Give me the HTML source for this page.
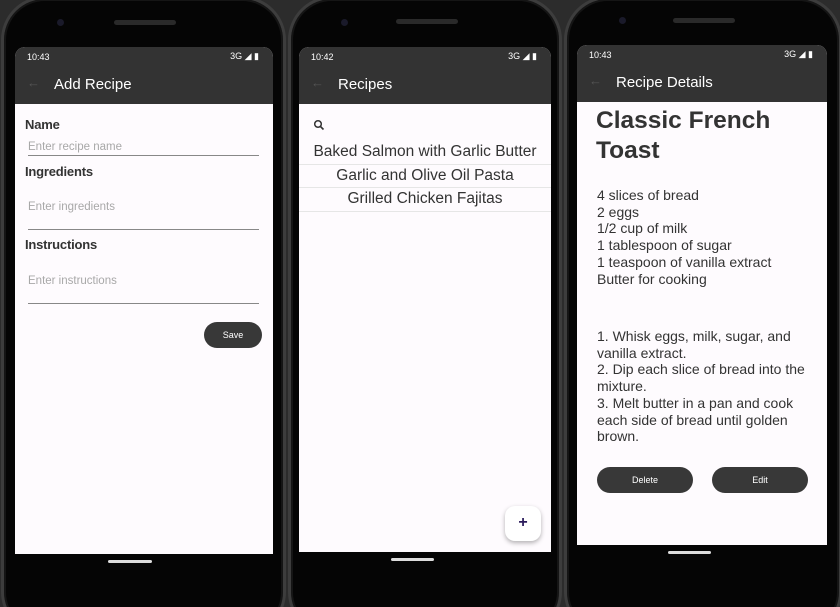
<!DOCTYPE html>
<html><head><meta charset="utf-8"><style>
*{margin:0;padding:0;box-sizing:border-box}
html{width:840px;height:607px;overflow:hidden}
body{width:840px;height:607px;background:#2c2c2c;position:relative;overflow:hidden;font-family:"Liberation Sans",sans-serif}
.ph{position:absolute;top:-4px;height:640px;background:#050505;border:3px solid #3d3d3d;border-radius:44px;box-shadow:inset 0 0 0 2px #151515}
.cam{position:absolute;width:7px;height:7px;border-radius:50%;background:#1a1a2a}
.spk{position:absolute;height:5px;width:62px;border-radius:3px;background:#2a2a2a}
.scr{position:absolute;background:#fefbfe;overflow:hidden;border-radius:10px 10px 0 0}
.sb{position:absolute;left:0;right:0;top:0;height:18px;background:#333;color:#fff;font-size:9px}
.ab{position:absolute;left:0;right:0;top:18px;height:39px;background:#333;color:#fff;font-size:15px}
.ab .t{position:absolute;left:39px;top:11px}
.ab .ar{position:absolute;left:12px;top:10px;color:#555;font-size:13px}
.abs{position:absolute}
.lbl{font-size:13px;color:#333;font-weight:bold;letter-spacing:-0.2px}
.hint{font-size:11.5px;color:#a8a8a8}
.ln{height:1px;background:#888}
.btn{position:absolute;background:#383838;color:#fff;font-size:9px;text-align:center;border-radius:14px}
.bar{position:absolute;height:3px;background:#ddd;border-radius:2px}
.d{font-size:14px;color:#333;line-height:16.7px}
</style></head><body>

<div class="ph" style="left:1px;width:285px"></div>
<div class="cam" style="left:57px;top:19px"></div><div class="spk" style="left:114px;top:20px"></div>
<div class="scr" style="left:15px;top:47px;width:258px;height:507px">
 <div class="sb"><span class="abs" style="left:12px;top:5px">10:43</span><span class="abs" style="right:14px;top:4px">3G ◢ ▮</span></div>
 <div class="ab"><span class="ar">←</span><span class="t">Add Recipe</span></div>
 <div class="abs lbl" style="left:10px;top:70px">Name</div>
 <div class="abs hint" style="left:13px;top:94px">Enter recipe name</div>
 <div class="abs ln" style="left:13px;top:108px;width:231px"></div>
 <div class="abs lbl" style="left:10px;top:117px">Ingredients</div>
 <div class="abs hint" style="left:13px;top:154px">Enter ingredients</div>
 <div class="abs ln" style="left:13px;top:182px;width:231px"></div>
 <div class="abs lbl" style="left:10px;top:190px">Instructions</div>
 <div class="abs hint" style="left:13px;top:228px">Enter instructions</div>
 <div class="abs ln" style="left:13px;top:256px;width:231px"></div>
 <div class="btn" style="left:189px;top:275px;width:58px;height:26px;line-height:26px">Save</div>
</div>
<div class="bar" style="left:108px;top:560px;width:44px"></div>

<div class="ph" style="left:288px;width:274px"></div>
<div class="cam" style="left:341px;top:19px"></div><div class="spk" style="left:396px;top:19px"></div>
<div class="scr" style="left:299px;top:47px;width:252px;height:505px">
 <div class="sb"><span class="abs" style="left:12px;top:5px">10:42</span><span class="abs" style="right:14px;top:4px">3G ◢ ▮</span></div>
 <div class="ab"><span class="ar">←</span><span class="t">Recipes</span></div>
 <svg class="abs" style="left:14px;top:72px" width="12" height="12" viewBox="0 0 12 12"><circle cx="5" cy="5" r="3.3" stroke="#333" stroke-width="1.5" fill="none"/><path d="M7.5 7.5L10.5 10.5" stroke="#333" stroke-width="1.6"/></svg>
 <div class="abs" style="left:0;width:252px;top:94px;font-size:15.5px;color:#333;text-align:center;line-height:22.5px">
  <div style="border-bottom:1px solid #e6e6e6">Baked Salmon with Garlic Butter</div>
  <div style="border-bottom:1px solid #e6e6e6">Garlic and Olive Oil Pasta</div>
  <div style="border-bottom:1px solid #e6e6e6">Grilled Chicken Fajitas</div>
 </div>
 <div class="abs" style="left:206px;top:459px;width:36px;height:35px;background:#fff;border-radius:10px;box-shadow:0 2px 5px rgba(0,0,0,.3);color:#2a1a5a;font-size:16px;font-weight:bold;text-align:center;line-height:34px">+</div>
</div>
<div class="bar" style="left:391px;top:558px;width:43px"></div>

<div class="ph" style="left:564px;width:278px"></div>
<div class="cam" style="left:619px;top:17px"></div><div class="spk" style="left:673px;top:18px"></div>
<div class="scr" style="left:577px;top:45px;width:250px;height:500px">
 <div class="sb"><span class="abs" style="left:12px;top:5px">10:43</span><span class="abs" style="right:14px;top:4px">3G ◢ ▮</span></div>
 <div class="ab"><span class="ar">←</span><span class="t">Recipe Details</span></div>
 <div class="abs" style="left:19px;top:61px;font-size:24.5px;font-weight:bold;color:#333;line-height:30px">Classic French<br>Toast</div>
 <div class="abs d" style="left:20px;top:142px">4 slices of bread<br>2 eggs<br>1/2 cup of milk<br>1 tablespoon of sugar<br>1 teaspoon of vanilla extract<br>Butter for cooking</div>
 <div class="abs d" style="left:20px;top:283px;width:225px">1. Whisk eggs, milk, sugar, and vanilla extract.<br>2. Dip each slice of bread into the mixture.<br>3. Melt butter in a pan and cook each side of bread until golden brown.</div>
 <div class="btn" style="left:20px;top:422px;width:96px;height:26px;line-height:26px">Delete</div>
 <div class="btn" style="left:135px;top:422px;width:96px;height:26px;line-height:26px">Edit</div>
</div>
<div class="bar" style="left:668px;top:551px;width:43px"></div>
</body></html>
